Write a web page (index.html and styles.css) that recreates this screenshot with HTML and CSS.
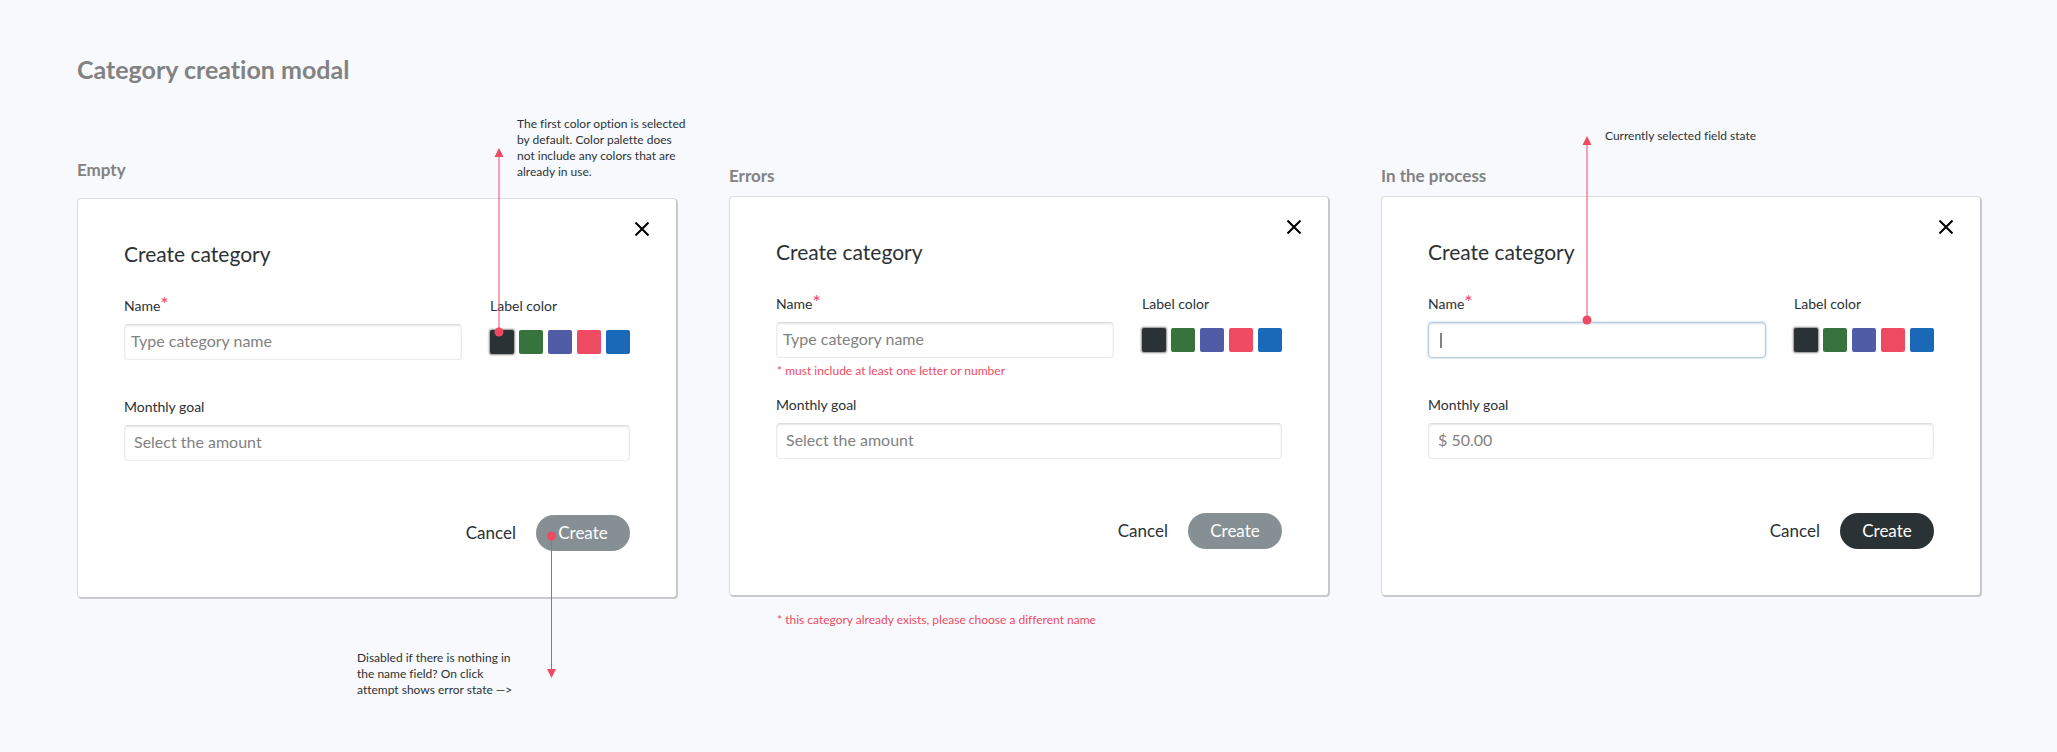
FILE: index.html
```html
<!DOCTYPE html>
<html lang="en">
<head>
<meta charset="utf-8">
<title>Category creation modal</title>
<link rel="stylesheet" href="styles.css">
</head>
<body>
<main class="board">
  <h1 class="board-title">Category creation modal</h1>
  <div class="states">

    <section class="state state-empty">
      <h2 class="state-name">Empty</h2>
      <form class="modal">
        <button class="close" type="button" aria-label="Close"><svg viewBox="0 0 14 14" width="14" height="14"><path d="M.5 .5L13.500 13.500M13.500 .5L.5 13.500"/></svg></button>
        <h3 class="modal-title">Create category</h3>
        <div class="row">
          <div class="field">
            <label class="label" for="name-1">Name<span class="required">*</span></label>
            <input class="input" id="name-1" type="text" placeholder="Type category name">
          </div>
          <fieldset class="palette">
            <legend class="label">Label color</legend>
            <div class="swatches">
              <input class="swatch ink" type="radio" name="color-1" aria-label="Black" checked>
              <input class="swatch green" type="radio" name="color-1" aria-label="Green">
              <input class="swatch indigo" type="radio" name="color-1" aria-label="Indigo">
              <input class="swatch coral" type="radio" name="color-1" aria-label="Coral">
              <input class="swatch blue" type="radio" name="color-1" aria-label="Blue">
              <div class="callout callout-swatch">
                <svg class="arrow" viewBox="0 0 10 189" width="10" height="189"><path class="line-soft" d="M5 8V184"/><path class="tip" d="M5 0L9.500 9H.5Z"/><circle class="tip" cx="5" cy="184" r="4.5"/></svg>
                <p class="note">The first color option is selected by default. Color palette does not include any colors that are already in use.</p>
              </div>
            </div>
          </fieldset>
        </div>
        <p class="error"></p>
        <div class="field">
          <label class="label" for="goal-1">Monthly goal</label>
          <input class="input amount" id="goal-1" type="text" placeholder="Select the amount">
        </div>
        <div class="actions">
          <button class="cancel" type="button">Cancel</button>
          <div class="submit">
            <button class="create" type="submit" disabled>Create</button>
            <div class="callout callout-create">
              <svg class="arrow" viewBox="0 0 10 147" width="10" height="147"><path class="line" d="M4.500 5V139"/><path class="tip" d="M4.500 147L9 138H0Z"/><circle class="tip" cx="4.500" cy="5" r="4.500"/></svg>
              <p class="note">Disabled if there is nothing in the name field? On click attempt shows error state —&gt;</p>
            </div>
          </div>
        </div>
      </form>
    </section>

    <section class="state">
      <h2 class="state-name">Errors</h2>
      <form class="modal">
        <button class="close" type="button" aria-label="Close"><svg viewBox="0 0 14 14" width="14" height="14"><path d="M.5 .5L13.500 13.500M13.500 .5L.5 13.500"/></svg></button>
        <h3 class="modal-title">Create category</h3>
        <div class="row">
          <div class="field">
            <label class="label" for="name-2">Name<span class="required">*</span></label>
            <input class="input" id="name-2" type="text" placeholder="Type category name" aria-describedby="error-2">
          </div>
          <fieldset class="palette">
            <legend class="label">Label color</legend>
            <div class="swatches">
              <input class="swatch ink" type="radio" name="color-2" aria-label="Black" checked>
              <input class="swatch green" type="radio" name="color-2" aria-label="Green">
              <input class="swatch indigo" type="radio" name="color-2" aria-label="Indigo">
              <input class="swatch coral" type="radio" name="color-2" aria-label="Coral">
              <input class="swatch blue" type="radio" name="color-2" aria-label="Blue">
            </div>
          </fieldset>
        </div>
        <p class="error" id="error-2">* must include at least one letter or number</p>
        <div class="field">
          <label class="label" for="goal-2">Monthly goal</label>
          <input class="input amount" id="goal-2" type="text" placeholder="Select the amount">
        </div>
        <div class="actions">
          <button class="cancel" type="button">Cancel</button>
          <button class="create" type="submit" disabled>Create</button>
        </div>
      </form>
      <p class="error error-below">* this category already exists, please choose a different name</p>
    </section>

    <section class="state">
      <h2 class="state-name">In the process</h2>
      <form class="modal">
        <button class="close" type="button" aria-label="Close"><svg viewBox="0 0 14 14" width="14" height="14"><path d="M.5 .5L13.500 13.500M13.500 .5L.5 13.500"/></svg></button>
        <h3 class="modal-title">Create category</h3>
        <div class="row">
          <div class="field">
            <label class="label" for="name-3">Name<span class="required">*</span></label>
            <div class="active-field">
              <input class="input active" id="name-3" type="text">
              <span class="caret"></span>
              <div class="callout callout-field">
                <svg class="arrow" viewBox="0 0 10 189" width="10" height="189"><path class="line-soft" d="M5 8V184"/><path class="tip" d="M5 0L9.500 9H.5Z"/><circle class="tip" cx="5" cy="184" r="4.5"/></svg>
                <p class="note">Currently selected field state</p>
              </div>
            </div>
          </div>
          <fieldset class="palette">
            <legend class="label">Label color</legend>
            <div class="swatches">
              <input class="swatch ink" type="radio" name="color-3" aria-label="Black" checked>
              <input class="swatch green" type="radio" name="color-3" aria-label="Green">
              <input class="swatch indigo" type="radio" name="color-3" aria-label="Indigo">
              <input class="swatch coral" type="radio" name="color-3" aria-label="Coral">
              <input class="swatch blue" type="radio" name="color-3" aria-label="Blue">
            </div>
          </fieldset>
        </div>
        <p class="error"></p>
        <div class="field">
          <label class="label" for="goal-3">Monthly goal</label>
          <input class="input amount" id="goal-3" type="text" value="$ 50.00">
        </div>
        <div class="actions">
          <button class="cancel" type="button">Cancel</button>
          <button class="create" type="submit">Create</button>
        </div>
      </form>
    </section>

  </div>
</main>
</body>
</html>
```
FILE: styles.css
```css
* {
  box-sizing: border-box;
}

body {
  margin: 0;
  background: #f8f9fd;
  color: #2b3235;
  font-family: Lato, "Open Sans", sans-serif;
  font-variant-ligatures: none;
}

h1, h2, h3, p {
  margin: 0;
}

.board {
  min-height: 100vh;
  padding: 51px 76px 48px 77px;
}

.board-title {
  color: #828282;
  font-size: 25px;
  font-weight: 700;
  line-height: 36px;
}

.states {
  display: grid;
  grid-template-columns: repeat(3, minmax(0, 1fr));
  gap: 52px;
  align-items: start;
  margin-top: 71px;
}

.state {
  padding-top: 6px;
}

.state-empty {
  padding-top: 0;
}

.state-name {
  padding-bottom: 8px;
  color: #828282;
  font-size: 17px;
  font-weight: 700;
  line-height: 24px;
}

.state-empty .state-name {
  padding-bottom: 16px;
}

.modal {
  position: relative;
  padding: 41px 46px 46px;
  border: 1px solid #dcdde0;
  border-right-color: #c8c9cb;
  border-bottom-color: #c8c9cb;
  border-radius: 4px;
  background: #fff;
  box-shadow: 1px 1px 0 #c8c9cb;
}

.close {
  position: absolute;
  top: 19px;
  right: 23px;
  display: grid;
  place-items: center;
  width: 22px;
  height: 22px;
  padding: 0;
  border: 0;
  background: none;
}

.close path {
  fill: none;
  stroke: #000;
  stroke-width: 2;
}

.modal-title {
  font-size: 21px;
  font-weight: 400;
  line-height: 28px;
}

.row {
  display: grid;
  grid-template-columns: minmax(0, 1fr) auto;
  gap: 28px;
  margin-top: 26px;
}

.field {
  display: flex;
  flex-direction: column;
}

.label {
  height: 30px;
  padding: 0;
  font-size: 14px;
  line-height: 24px;
}

.required {
  color: #ee4a62;
  font-size: 20px;
  line-height: 18px;
}

.input {
  width: 100%;
  height: 36px;
  padding: 0 6px 3px;
  border: 1px solid #ececee;
  border-top-color: #dcdcde;
  border-radius: 4px;
  background: #fff;
  box-shadow: inset 0 1px 2px #e4e4e6;
  color: #828282;
  font: 400 16px/20px Lato, "Open Sans", sans-serif;
}

.input::placeholder {
  color: #828282;
  opacity: 1;
}

.amount {
  padding: 0 9px 3px;
}

.active-field {
  position: relative;
}

.active {
  display: block;
  border-color: #b9cde0;
  box-shadow: 0 0 1px 1px #dfeaf4, inset 0 1px 2px #dcdfe4;
}

.caret {
  position: absolute;
  top: 11px;
  left: 12px;
  width: 2px;
  height: 15px;
  background: #828282;
}

.palette {
  min-width: 0;
  margin: 0;
  padding: 0;
  border: 0;
}

.swatches {
  position: relative;
  display: flex;
  gap: 5px;
  padding-top: 6px;
}

.swatch {
  appearance: none;
  width: 24px;
  height: 24px;
  margin: 0;
  border-radius: 2px;
}

.swatch:checked {
  box-shadow: 0 0 2px 1px #8c8c8c;
}

.ink { background: #2b3235; }
.green { background: #37733c; }
.indigo { background: #505ca6; }
.coral { background: #ee4a62; }
.blue { background: #1a69b9; }

.error {
  min-height: 35px;
  padding: 3px 1px 0;
  color: #ee4a62;
  font-size: 12px;
  line-height: 20px;
}

.error-below {
  padding: 14px 48px 0;
}

.actions {
  display: flex;
  justify-content: flex-end;
  gap: 20px;
  margin-top: 54px;
}

.submit {
  position: relative;
}

.cancel,
.create {
  height: 36px;
  padding: 0;
  border: 0;
  font: 400 17px/20px Lato, "Open Sans", sans-serif;
}

.cancel {
  background: none;
  color: #2b3235;
}

.create {
  width: 94px;
  border-radius: 18px;
  background: #2b3235;
  color: #fff;
}

.create:disabled {
  background: #869094;
}

.callout {
  position: absolute;
  z-index: 1;
  width: 10px;
}

.callout-swatch {
  left: 4px;
  bottom: 17px;
}

.callout-field {
  left: 154px;
  bottom: 33px;
}

.callout-create {
  top: 16px;
  left: 11px;
}

.arrow {
  display: block;
}

.tip {
  fill: #ee4a62;
}

.line {
  stroke: #ee4a62;
}

.line-soft {
  stroke: #ee4a62;
  stroke-width: 2;
  stroke-opacity: 0.5;
}

.note {
  position: absolute;
  left: 23px;
  width: 174px;
  font-size: 12px;
  line-height: 16px;
}

.callout-swatch .note {
  top: -32px;
}

.callout-field .note {
  top: -8px;
}

.callout-create .note {
  bottom: -20px;
  left: -190px;
  width: 168px;
}
```
